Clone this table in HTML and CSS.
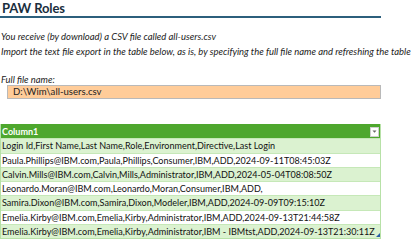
FILE: index.html
```html
<!DOCTYPE html>
<html>
<head>
<meta charset="utf-8">
<link rel="stylesheet" href="styles.css">
</head>
<body>
<div class="sheet">
  <h1 class="title">PAW Roles</h1>
  <div class="intro">
    <p>You receive (by download) a CSV file called all-users.csv</p>
    <p>Import the text file export in the table below, as is, by specifying the full file name and refreshing the table</p>
  </div>
  <div class="field">
    <div class="field-label">Full file name:</div>
    <div class="field-input">D:\Wim\all-users.csv</div>
  </div>
  <div class="table">
    <div class="row head"><span>Column1</span><span class="dd"><svg width="7" height="7" viewBox="0 0 7 7"><path d="M1.5 2.5h4L3.5 4.8z" fill="#666"/></svg></span></div>
    <div class="row odd">Login Id,First Name,Last Name,Role,Environment,Directive,Last Login</div>
    <div class="row">Paula.Phillips@IBM.com,Paula,Phillips,Consumer,IBM,ADD,2024-09-11T08:45:03Z</div>
    <div class="row odd">Calvin.Mills@IBM.com,Calvin,Mills,Administrator,IBM,ADD,2024-05-04T08:08:50Z</div>
    <div class="row">Leonardo.Moran@IBM.com,Leonardo,Moran,Consumer,IBM,ADD,</div>
    <div class="row odd">Samira.Dixon@IBM.com,Samira,Dixon,Modeler,IBM,ADD,2024-09-09T09:15:10Z</div>
    <div class="row">Emelia.Kirby@IBM.com,Emelia,Kirby,Administrator,IBM,ADD,2024-09-13T21:44:58Z</div>
    <div class="row odd last">Emelia.Kirby@IBM.com,Emelia,Kirby,Administrator,IBM - IBMtst,ADD,2024-09-13T21:30:11Z<span class="grip"></span></div>
  </div>
</div>
</body>
</html>
```
FILE: styles.css
```css
html, body {
  margin: 0;
  padding: 0;
  background: #fff;
}
body {
  font-family: Lato, "Open Sans", sans-serif;
  color: #111;
}
.sheet {
  width: 381px;
  padding-top: 1px;
}
.title {
  margin: 0;
  padding-left: 2px;
  font-size: 13px;
  font-weight: 700;
  letter-spacing: -0.1px;
  line-height: 15px;
  height: 15px;
  color: #1a2e3d;
  border-bottom: 2px solid #2c5f7c;
}
.intro {
  margin-top: 11px;
  padding-left: 1px;
  font-style: italic;
  font-size: 9.45px;
  line-height: 15px;
  color: #222;
  white-space: nowrap;
}
.intro p { margin: 0; }
.field {
  margin-top: 15px;
}
.field-label {
  font-style: italic;
  font-size: 9.4px;
  line-height: 11px;
  padding-left: 1px;
  color: #222;
}
.field-input {
  margin-left: 7px;
  height: 12px;
  background: #ffcc99;
  border: 1px solid #b9b9b9;
  font-size: 9.6px;
  line-height: 12px;
  padding-left: 5px;
  color: #222;
}
.table {
  margin-top: 25px;
  border: 1px solid #b7e1a7;
  border-top: none;
}
.row {
  height: 13.25px;
  line-height: 13px;
  font-size: 9.05px;
  padding-left: 1px;
  border-top: 1px solid #c6e8b8;
  white-space: nowrap;
  position: relative;
}
.row.odd { background: #dbf2d0; }
.row.head {
  background: #4ea72e;
  color: #fff;
  font-weight: 700;
  border-top: 1px solid #4ea72e;
  display: flex;
  justify-content: space-between;
}
.dd {
  width: 9px;
  height: 10px;
  margin: 1.5px 1px 0 0;
  background: #fff;
  border: 1px solid #cfcfcf;
  box-sizing: border-box;
  display: flex;
  align-items: center;
  justify-content: center;
}
.grip {
  position: absolute;
  right: 0;
  bottom: 1px;
  width: 0;
  height: 0;
  border-left: 4px solid transparent;
  border-bottom: 4px solid #2b5fa6;
}
```
